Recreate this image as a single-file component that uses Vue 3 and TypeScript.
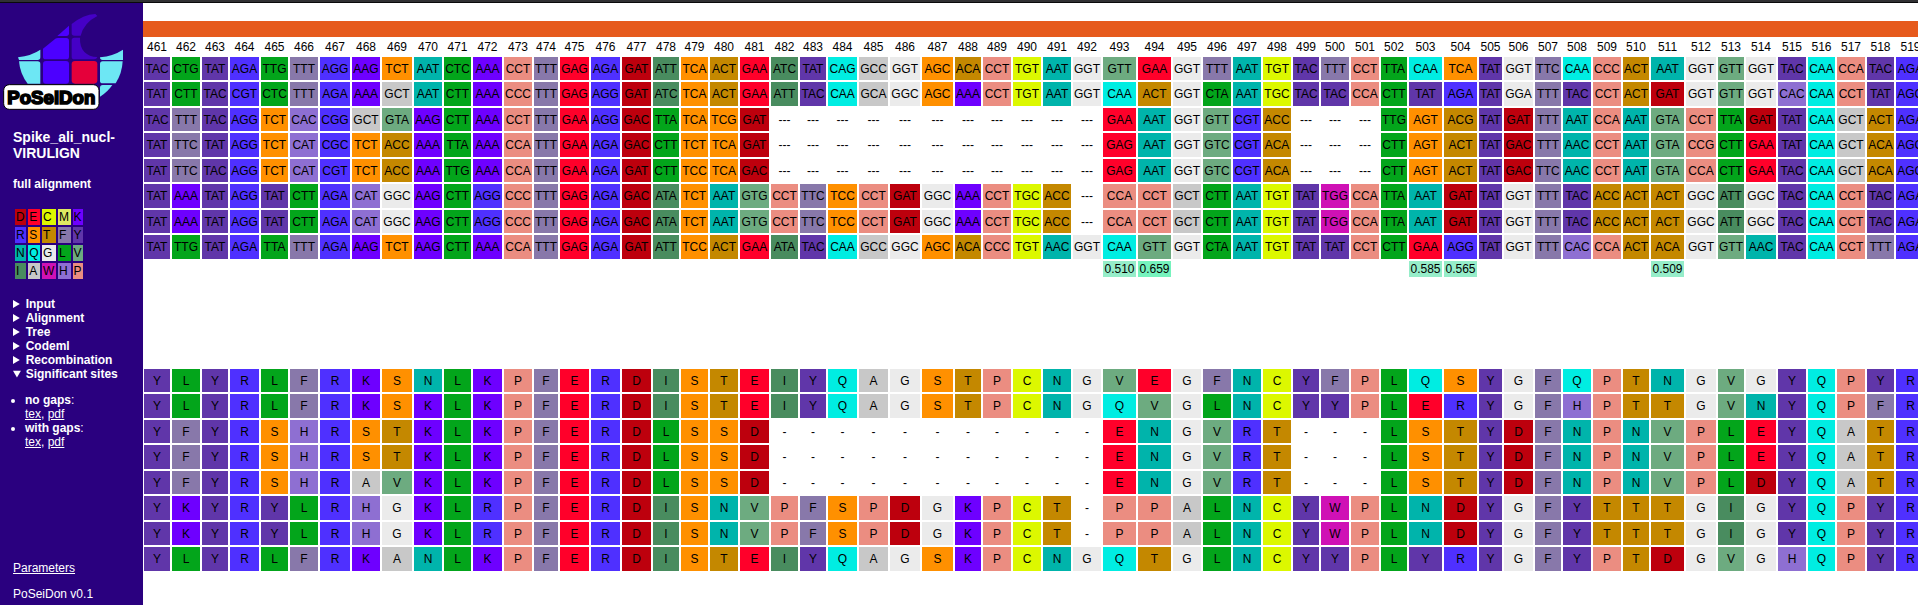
<script setup lang="ts">
interface Sequence {
  id: number
  cells: string[]
}

const firstPosition = 461

const columnWidths: number[] = [
  26, 28, 26, 29, 27, 28, 30, 28, 30, 28, 27, 29, 28, 24, 29,
  29, 29, 26, 27, 28, 29, 27, 26, 29, 29, 30, 31, 26, 28, 28,
  28, 28, 33, 33, 28, 28, 28, 28, 26, 28, 28, 26, 33, 33, 23,
  29, 26, 28, 28, 26, 33, 30, 26, 30, 28, 27, 28, 27, 29,
]

const spacing = 2
const tableWidth: number = columnWidths.reduce((sum, width) => sum + width + spacing, spacing)
const positions: number[] = columnWidths.map((_, index) => firstPosition + index)

const gap = (count: number): string => Array(count).fill('---').join(' ')

const codonLines: string[] = [
  'TAC CTG TAT AGA TTG TTT AGG AAG TCT AAT CTC AAA CCT TTT GAG AGA GAT ATT TCA ACT GAA ATC TAT CAG GCC GGT AGC ACA CCT TGT AAT GGT GTT GAA GGT TTT AAT TGT TAC TTT CCT TTA CAA TCA TAT GGT TTC CAA CCC ACT AAT GGT GTT GGT TAC CAA CCA TAC AGA',
  'TAT CTT TAC CGT CTC TTT AGA AAA GCT AAT CTT AAA CCC TTT GAG AGG GAT ATC TCA ACT GAA ATT TAC CAA GCA GGC AGC AAA CCT TGT AAT GGT CAA ACT GGT CTA AAT TGC TAC TAC CCA CTT TAT AGA TAT GGA TTT TAC CCT ACT GAT GGT GTT GGT CAC CAA CCT TAT AGG',
  `TAC TTT TAC AGG TCT CAC CGG GCT GTA AAG CTT AAA CCT TTT GAA AGG GAC TTA TCA TCG GAT ${gap(11)} GAA AAT GGT GTT CGT ACC ${gap(3)} TTG AGT ACG TAT GAT TTT AAT CCA AAT GTA CCT TTA GAT TAT CAA GCT ACT AGA`,
  `TAT TTC TAT AGG TCT CAT CGC TCT ACC AAA TTA AAA CCA TTT GAA AGA GAC CTT TCT TCA GAT ${gap(11)} GAG AAT GGT GTC CGT ACA ${gap(3)} CTT AGT ACT TAT GAC TTT AAC CCT AAT GTA CCG CTT GAA TAT CAA GCT ACA AGG`,
  `TAT TTC TAC AGG TCT CAT CGT TCT ACC AAA TTG AAA CCA TTT GAA AGA GAT CTT TCC TCA GAC ${gap(11)} GAG AAT GGT GTC CGT ACA ${gap(3)} CTT AGT ACT TAT GAC TTC AAC CCT AAT GTA CCA CTT GAA TAC CAA GCT ACA AGG`,
  'TAT AAA TAT AGG TAT CTT AGA CAT GGC AAG CTT AGG CCC TTT GAG AGA GAC ATA TCT AAT GTG CCT TTC TCC CCT GAT GGC AAA CCT TGC ACC --- CCA CCT GCT CTT AAT TGT TAT TGG CCA TTA AAT GAT TAT GGT TTT TAC ACC ACT ACT GGC ATT GGC TAC CAA CCT TAC AGA',
  'TAT AAA TAT AGG TAT CTT AGA CAT GGC AAG CTT AGG CCC TTT GAG AGA GAC ATA TCT AAT GTG CCT TTC TCC CCT GAT GGC AAA CCT TGC ACC --- CCA CCT GCT CTT AAT TGT TAT TGG CCA TTA AAT GAT TAT GGT TTT TAC ACC ACT ACT GGC ATT GGC TAC CAA CCT TAC AGA',
  'TAT TTG TAT AGA TTA TTT AGA AAG TCT AAG CTT AAA CCA TTT GAG AGA GAT ATT TCC ACT GAA ATA TAC CAA GCC GGC AGC ACA CCC TGT AAC GGT CAA GTT GGT CTA AAT TGT TAT TAT CCT CTT GAA AGG TAT GGT TTT CAC CCA ACT ACA GGT GTT AAC TAC CAA CCT TTT AGA',
]

const proteinLines: string[] = [
  'YLYRLFRKSNLKPFERDISTEIYQAGSTPCNGVEGFNCYFPLQSYGFQPTNGVGYQPYR',
  'YLYRLFRKSKLKPFERDISTEIYQAGSTPCNGQVGLNCYYPLERYGFHPTTGVNYQPFR',
  'YFYRSHRSTKLKPFERDLSSD-----------ENGVRT---LSTYDFNPNVPLEYQATR',
  'YFYRSHRSTKLKPFERDLSSD-----------ENGVRT---LSTYDFNPNVPLEYQATR',
  'YFYRSHRAVKLKPFERDLSSD-----------ENGVRT---LSTYDFNPNVPLDYQATR',
  'YKYRYLRHGKLRPFERDISNVPFSPDGKPCT-PPALNCYWPLNDYGFYTTTGIGYQPYR',
  'YKYRYLRHGKLRPFERDISNVPFSPDGKPCT-PPALNCYWPLNDYGFYTTTGIGYQPYR',
  'YLYRLFRKANLKPFERDISTEIYQAGSKPCNGQTGLNCYYPLYRYGFYPTDGVGHQPYR',
]

const codons: Sequence[] = codonLines.map((line, id) => ({ id, cells: line.split(' ') }))
const proteins: Sequence[] = proteinLines.map((line, id) => ({ id, cells: line.split('') }))

// Standard genetic code, bases ordered T, C, A, G
const bases = 'TCAG'
const geneticCode = 'FFLLSSSSYY**CC*WLLLLPPPPHHQQRRRRIIIMTTTTNNKKSSRRVVVVAAAADDEEGGGG'

function translate(codon: string): string {
  const [a, b, c] = codon.split('').map((base) => bases.indexOf(base))
  return a < 0 ? '-' : geneticCode[a * 16 + b * 4 + c]
}

function residueClass(residue: string): string {
  return residue === '-' ? 'gap' : `aa-${residue}`
}

const scores: Record<number, { value: string; level: string }> = {
  493: { value: '0.510', level: 'low' },
  494: { value: '0.659', level: 'high' },
  503: { value: '0.585', level: 'low' },
  504: { value: '0.565', level: 'low' },
  511: { value: '0.509', level: 'low' },
}

const legend: string[][] = ['DECMK', 'RSTFY', 'NQGLV', 'IAWHP'].map((row) => row.split(''))
const sections: string[] = ['Input', 'Alignment', 'Tree', 'Codeml', 'Recombination']
const downloads: string[] = ['no gaps', 'with gaps']
</script>

<template>
  <div class="page">
    <div class="top-edge"></div>
    <div class="layout">
      <aside class="sidebar">
        <svg class="logo" viewBox="9 39 363 294" width="121" height="98" role="img" aria-label="PoSeiDon">
          <g fill="#4c00ff">
            <path d="M172 108L207 77V100Q207 108 199 108Z" />
            <path d="M129 146L166 116Q169 114 174 114H199Q207 114 207 122V170Q207 178 199 178H137Q129 178 129 170Z" />
            <rect x="129" y="183" width="78" height="68" rx="9" />
          </g>
          <g fill="#4500c6">
            <path d="M215 72Q250 44 286 42L292 48Q252 68 242 107H223Q215 107 215 99Z" />
            <path d="M223 113H240C238 150 260 170 292 171Q290 178 282 178H223Q215 178 215 170V121Q215 113 223 113Z" />
          </g>
          <rect x="215" y="183" width="77" height="68" rx="10" fill="#e5003a" />
          <g fill="#6de7f4">
            <path d="M54 172Q95 167 121 149V172Q121 180 113 180H57Z" />
            <path d="M57 184H113Q121 184 121 192V251H83Q60 222 57 184Z" />
            <path d="M300 172Q340 168 369 149V180H308Q300 180 300 172Z" />
            <path d="M308 184H368Q366 221 347 250H308Q300 250 300 242V192Q300 184 308 184Z" />
            <path d="M308 255H337Q323 276 300 290V263Q300 255 308 255Z" />
          </g>
          <rect x="11" y="254" width="286" height="74" rx="17" fill="#fff" stroke="#000" stroke-width="3" />
          <text class="logo-text" x="154" y="311" text-anchor="middle">PoSeiDon</text>
        </svg>

        <h1 class="title">Spike_ali_nucl-<br />VIRULIGN</h1>
        <h2 class="subtitle">full alignment</h2>

        <table class="legend">
          <tbody>
            <tr v-for="(row, index) in legend" :key="index">
              <td v-for="residue in row" :key="residue" :class="residueClass(residue)">{{ residue }}</td>
            </tr>
          </tbody>
        </table>

        <nav class="menu">
          <details v-for="section in sections" :key="section">
            <summary>{{ section }}</summary>
          </details>
          <details open>
            <summary>Significant sites</summary>
            <ul>
              <li v-for="item in downloads" :key="item">
                <b>{{ item }}</b>:<br /><a href="#">tex</a>, <a href="#">pdf</a>
              </li>
            </ul>
          </details>
        </nav>

        <footer class="footer">
          <a href="#">Parameters</a>
          <span>PoSeiDon v0.1</span>
        </footer>
      </aside>

      <main class="content">
        <div class="fragment"></div>
        <table class="alignment" :style="{ width: tableWidth + 'px' }">
          <colgroup>
            <col v-for="(width, index) in columnWidths" :key="index" :style="{ width: width + 'px' }" />
          </colgroup>
          <thead>
            <tr>
              <th v-for="position in positions" :key="position" scope="col">{{ position }}</th>
            </tr>
          </thead>
          <tbody>
            <tr v-for="sequence in codons" :key="sequence.id">
              <td v-for="(codon, index) in sequence.cells" :key="index" :class="residueClass(translate(codon))">{{ codon }}</td>
            </tr>
          </tbody>
          <tfoot>
            <tr>
              <td v-for="position in positions" :key="position" :class="scores[position]?.level">{{ scores[position]?.value }}</td>
            </tr>
          </tfoot>
        </table>

        <table class="alignment protein" :style="{ width: tableWidth + 'px' }">
          <colgroup>
            <col v-for="(width, index) in columnWidths" :key="index" :style="{ width: width + 'px' }" />
          </colgroup>
          <tbody>
            <tr v-for="sequence in proteins" :key="sequence.id">
              <td v-for="(residue, index) in sequence.cells" :key="index" :class="residueClass(residue)">{{ residue }}</td>
            </tr>
          </tbody>
        </table>
      </main>
    </div>
  </div>
</template>

<style>
body {
  margin: 0;
}
</style>

<style scoped>
.page {
  display: flex;
  flex-direction: column;
  min-height: 100vh;
  background: #fff;
  color: #000;
  font-family: "Liberation Sans", Arial, sans-serif;
  font-size: 12px;
  line-height: 14px;
}

.top-edge {
  height: 2px;
  background: #303033;
  border-bottom: 1px solid #09090b;
}

.layout {
  display: flex;
  flex: 1;
}

.sidebar {
  display: flex;
  flex-direction: column;
  flex: none;
  box-sizing: border-box;
  width: 143px;
  padding: 10px 3px 4px 13px;
  background: #2a007f;
  color: #fff;
}

.sidebar a {
  color: inherit;
}

.logo {
  display: block;
  flex: none;
  margin-left: -10px;
}

.logo-text {
  font-family: "Liberation Sans", Arial, sans-serif;
  font-size: 56px;
  font-weight: 700;
  stroke: #000;
  stroke-width: 5px;
}

.title {
  margin: 18px 0 16px;
  font-size: 14px;
  line-height: 16px;
}

.subtitle {
  margin: 0 0 16px;
  font-size: 12px;
  line-height: 14px;
}

.legend {
  align-self: flex-start;
  width: 72px;
  border-spacing: 2px;
  color: #000;
}

.legend td {
  padding: 1px;
}

.menu {
  margin-top: 16px;
}

.menu summary {
  font-weight: 700;
}

.menu ul {
  margin: 12px 0 0;
  padding-left: 12px;
}

.footer {
  display: flex;
  flex-direction: column;
  align-items: flex-start;
  gap: 12px;
  margin-top: auto;
}

.content {
  flex: 1;
  min-width: 0;
  padding-top: 18px;
  overflow: hidden;
}

.fragment {
  height: 16px;
  background: #e65a1c;
}

.alignment {
  margin-left: -1px;
  table-layout: fixed;
  border-spacing: 2px;
  text-align: center;
}

.alignment th,
.alignment td {
  padding: 1px 0;
  font-weight: 400;
  white-space: nowrap;
}

.alignment tbody td {
  box-sizing: border-box;
  height: 23px;
}

.alignment tbody tr:nth-child(even) td {
  height: 24px;
}

.protein {
  margin-top: 88px;
}

.low { background: #96edc9; }
.high { background: #76f3bd; }

.aa-D { background: #bd000d; }
.aa-E { background: #ff002a; }
.aa-C { background: #dcf800; }
.aa-M { background: #dfe962; }
.aa-K { background: #6e00ff; }
.aa-R { background: #4f30ff; }
.aa-S { background: #ff9000; }
.aa-T { background: #c48800; }
.aa-F { background: #8878aa; }
.aa-Y { background: #6036a9; }
.aa-N { background: #00b4ab; }
.aa-Q { background: #00ede2; }
.aa-G { background: #ebebeb; }
.aa-L { background: #03a51b; }
.aa-V { background: #6dab80; }
.aa-I { background: #498c5f; }
.aa-A { background: #c8c8c8; }
.aa-W { background: #cf11b5; }
.aa-H { background: #8e6fd2; }
.aa-P { background: #eb8d81; }
</style>
